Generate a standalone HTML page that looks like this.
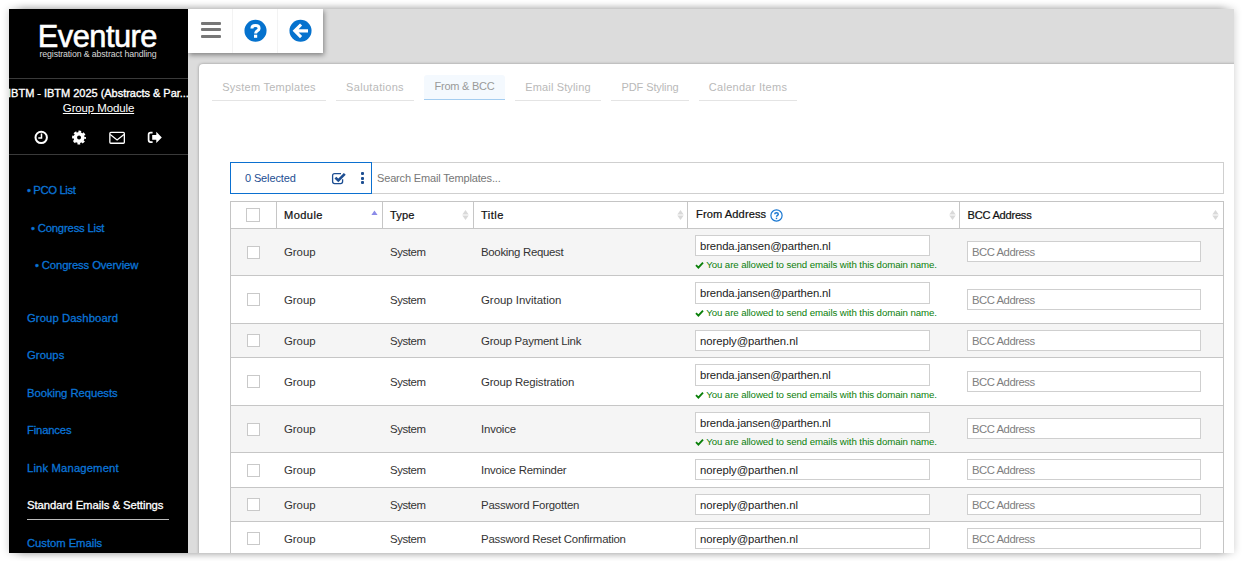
<!DOCTYPE html>
<html lang="en">
<head>
<meta charset="utf-8">
<title>Eventure - Standard Emails &amp; Settings</title>
<style>
*{box-sizing:border-box;margin:0;padding:0}
html,body{width:1242px;height:561px;background:#fff;overflow:hidden}
body{font-family:"Liberation Sans",sans-serif;font-size:11px;color:#222;position:relative}
#frame{position:absolute;left:9px;top:9px;width:1225px;height:544px;background:#dcdcdc;overflow:hidden}
#shA{position:absolute;left:9px;top:9px;width:1225px;height:544px;box-shadow:0 0 8px rgba(0,0,0,.2)}
#shB{position:absolute;left:19px;top:9px;width:1205px;height:544px;box-shadow:0 0 8px rgba(0,0,0,.29)}
.abs{position:absolute;white-space:nowrap}
/* sidebar */
#side{position:absolute;left:0;top:0;width:179px;height:544px;background:#000;overflow:hidden}
#side .hr{position:absolute;left:0;width:179px;height:1px;background:#3a3a3a}
#logo{left:28.7px;top:10px;font-size:30.8px;line-height:36px;color:#fff;letter-spacing:-.5px;-webkit-text-stroke:.6px #fff}
#sub{left:30.5px;top:39.5px;font-size:8.8px;line-height:10px;color:#d8d8d8}
#ev{left:-2px;top:76px;width:183px;text-align:center;font-size:11px;-webkit-text-stroke:.35px #fff;color:#fff;line-height:16px}
#gm{left:0;top:91px;width:179px;text-align:center;font-size:11.5px;color:#fff;line-height:16px;text-decoration:underline}
.mi{position:absolute;white-space:nowrap;font-size:11.3px;line-height:16px;color:#0b74d6;-webkit-text-stroke:.3px #0b74d6}
.mi.act{-webkit-text-stroke:.3px #fff}
.mi.act{color:#fff}
#actline{position:absolute;left:18px;top:510px;width:142px;height:1px;background:#bbb}
/* toolbar */
#tb{position:absolute;left:179px;top:0;width:135px;height:44px;background:#fff;box-shadow:1px 2px 5px rgba(0,0,0,.42)}
#tb .sep{position:absolute;top:0;width:1px;height:44px;background:#f3f3f3}
/* card */
#card{position:absolute;left:190px;top:55px;width:1040px;height:500px;background:#fff;border-radius:4px 0 0 0;box-shadow:0 0 3px rgba(0,0,0,.35)}
.tab{position:absolute;top:67px;height:25px;border-bottom:1px solid #e4e4e4;color:#b9b9b9;font-size:11px;line-height:22px;text-align:center;white-space:nowrap}
.tab.on{top:66px;background:#f4f9fe;border-bottom:1px solid #a4cdf0;color:#999;border-radius:3px 3px 0 0}
/* search row */
#sel{position:absolute;left:221px;top:153px;width:142px;height:32px;border:1px solid #0b70d0;background:#fff}
#search{position:absolute;left:362px;top:153px;width:853px;height:32px;border:1px solid #cfcfcf;border-left:none;background:#fff}
/* table */
#tbl{position:absolute;left:221px;top:192px;width:994px;height:400px;border-left:1px solid #c4c4c4;border-right:1px solid #c4c4c4;border-top:1px solid #c4c4c4;background:#fff}
.row{position:absolute;left:0;width:992px;border-bottom:1px solid #c6c6c6}
.row.g{background:#f5f5f5}
.cb{position:absolute;left:16px;width:13px;height:13px;border:1px solid #c9c9c9;background:#fff}
.c{position:absolute;white-space:nowrap;font-size:11.4px;line-height:14px;color:#333}
.h{position:absolute;white-space:nowrap;font-size:11.1px;line-height:14px;color:#111;-webkit-text-stroke:.22px #111;top:6px}
.vs{position:absolute;top:0;width:1px;height:27px;background:#c6c6c6}
.in{position:absolute;height:21px;border:1px solid #cfcfcf;background:#fff;font-size:11.3px;line-height:18px;padding:1px 0 0 4px;color:#222;white-space:nowrap}
.in.ph{color:#808080}
.ok{position:absolute;white-space:nowrap;font-size:9.7px;line-height:12px;color:#0a800a}
.sort{position:absolute;top:7px;width:7px;height:12px}
</style>
</head>
<body>
<div id="shA"></div><div id="shB"></div>
<div id="frame">
  <div id="side">
    <div id="logo" class="abs">Eventure</div>
    <div id="sub" class="abs" style="letter-spacing:-0.13px">registration &amp; abstract handling</div>
    <div class="hr" style="top:69px"></div>
    <div id="ev" class="abs" style="letter-spacing:-0.02px">IBTM - IBTM 2025 (Abstracts &amp; Par...</div>
    <div id="gm" class="abs" style="letter-spacing:-0.13px">Group Module</div>
        <svg style="position:absolute;left:0;top:116px;width:179px;height:26px" viewBox="0 116 179 26">
      <circle cx="32.2" cy="128.4" r="5.7" fill="none" stroke="#fff" stroke-width="2"/>
      <path d="M32.5 124.6 V129 H29.3" fill="none" stroke="#fff" stroke-width="1.5"/>
      <circle cx="70.05" cy="128.55" r="5.9" fill="none" stroke="#fff" stroke-width="2.1" stroke-dasharray="2.7 1.934" stroke-dashoffset="1.35"/>
      <circle cx="70.05" cy="128.55" r="3.75" fill="none" stroke="#fff" stroke-width="3.5"/>
      <rect x="100.85" y="123.45" width="14.5" height="10.8" rx="1" fill="none" stroke="#fff" stroke-width="1.3"/>
      <path d="M101.2 125.6 L108.1 131 L115 125.6" fill="none" stroke="#fff" stroke-width="1.3"/>
      <path d="M143.6 123.7 H141.6 Q139.6 123.7 139.6 125.7 V131.1 Q139.6 133.1 141.6 133.1 H143.6" fill="none" stroke="#fff" stroke-width="1.7"/>
      <path d="M143.2 126 H147.3 V122.7 L152.8 128.4 L147.3 134.1 V130.8 H143.2 Z" fill="#fff"/>
    </svg>
    <div class="hr" style="top:145px"></div>
    <div class="mi" style="left:18px;top:173px;letter-spacing:-0.38px">• PCO List</div>
    <div class="mi" style="left:22px;top:211px;letter-spacing:-0.19px">• Congress List</div>
    <div class="mi" style="left:26px;top:248px;letter-spacing:-0.13px">• Congress Overview</div>
    <div class="mi" style="left:18px;top:301px;letter-spacing:0.08px">Group Dashboard</div>
    <div class="mi" style="left:18px;top:338px;letter-spacing:0.05px">Groups</div>
    <div class="mi" style="left:18px;top:376px;letter-spacing:-0.07px">Booking Requests</div>
    <div class="mi" style="left:18px;top:413px;letter-spacing:-0.18px">Finances</div>
    <div class="mi" style="left:18px;top:451px;letter-spacing:0.13px">Link Management</div>
    <div class="mi act" style="left:18px;top:488px;letter-spacing:-0.04px">Standard Emails &amp; Settings</div>
    <div id="actline"></div>
    <div class="mi" style="left:18px;top:526px;letter-spacing:-0.06px">Custom Emails</div>
  </div>
  <div id="card"></div>
  <div id="tb">
    <div class="sep" style="left:44px"></div>
    <div class="sep" style="left:89px"></div>
    <div style="position:absolute;left:13px;top:13px;width:20px;height:3px;background:#777;border-radius:1px"></div>
    <div style="position:absolute;left:13px;top:19px;width:20px;height:3px;background:#777;border-radius:1px"></div>
    <div style="position:absolute;left:13px;top:26px;width:20px;height:3px;background:#777;border-radius:1px"></div>
    <svg style="position:absolute;left:56px;top:10px;width:23px;height:23px" viewBox="0 0 23 23"><circle cx="11.5" cy="11.8" r="11.05" fill="#0572ce"/><path d="M7.9 9.4 C7.9 5.6 15.1 5.6 15.1 9.4 C15.1 11.9 11.6 11.7 11.6 14.4" fill="none" stroke="#fff" stroke-width="3"/><rect x="10" y="15.7" width="3.2" height="3.1" fill="#fff"/></svg>
    <svg style="position:absolute;left:101px;top:10px;width:23px;height:23px" viewBox="0 0 23 23"><circle cx="11.5" cy="11.8" r="11.05" fill="#0572ce"/><path transform="translate(0,.3)" d="M3.6 11.5 L11 4.1 L13.1 6.2 L9.6 9.9 H19 V13.1 H9.6 L13.1 16.8 L11 18.9 Z" fill="#fff"/></svg>
  </div>
  <div class="tab" style="left:203px;width:114px;letter-spacing:0.25px">System Templates</div>
  <div class="tab" style="left:327px;width:78px;letter-spacing:0.31px">Salutations</div>
  <div class="tab on" style="left:415px;width:81px;letter-spacing:-0.23px">From &amp; BCC</div>
  <div class="tab" style="left:506px;width:86px;letter-spacing:0.14px">Email Styling</div>
  <div class="tab" style="left:602px;width:78px;letter-spacing:-0.11px">PDF Styling</div>
  <div class="tab" style="left:690px;width:98px;letter-spacing:0.27px">Calendar Items</div>
  <div id="search"><div class="abs" style="left:6px;top:8px;font-size:11px;line-height:14px;color:#777;letter-spacing:-0.16px">Search Email Templates...</div></div>
  <div id="sel"><div class="abs" style="left:14px;top:8px;font-size:11px;line-height:14px;color:#1d4e92;letter-spacing:-0.13px">0 Selected</div><svg style="position:absolute;left:100px;top:8px;width:16px;height:14px" viewBox="0 0 16 14"><path d="M11.6 8.2 V10.6 Q11.6 12.6 9.6 12.6 H3.6 Q1.6 12.6 1.6 10.6 V4.6 Q1.6 2.6 3.6 2.6 H10" fill="none" stroke="#1d4e92" stroke-width="1.3"/><path d="M4.4 6.6 L7.3 9.5 L13.8 2.9" fill="none" stroke="#1d4e92" stroke-width="2.6"/></svg><div style="position:absolute;left:129.5px;top:9.2px;width:3.8px;height:3.2px;background:#1d4e92;border-radius:1px"></div><div style="position:absolute;left:129.5px;top:13.5px;width:3.8px;height:3.2px;background:#1d4e92;border-radius:1px"></div><div style="position:absolute;left:129.5px;top:17.8px;width:3.8px;height:3.2px;background:#1d4e92;border-radius:1px"></div></div>
  <div id="tbl">
  <div class="row" style="top:0;height:27px;background:#fff">
    <div class="cb" style="top:6px;left:15px;width:14px;height:14px"></div>
    <div class="vs" style="left:45px"></div>
    <div class="vs" style="left:151px"></div>
    <div class="vs" style="left:242px"></div>
    <div class="vs" style="left:456px"></div>
    <div class="vs" style="left:728px"></div>
    <div class="h" style="left:53px;letter-spacing:0.42px">Module</div>
    <svg class="sort" style="left:140px;top:7px;height:7px" viewBox="0 0 7 7"><path d="M3.5 1.5 L6.6 5.9 H0.4 Z" fill="#8b8be8"/></svg>
    <div class="h" style="left:159px;letter-spacing:0.11px">Type</div>
    <svg class="sort" style="left:230.5px" viewBox="0 0 7 12"><path d="M3.5 1 L6.7 5.4 H0.3 Z M3.5 11 L6.7 6.6 H0.3 Z" fill="#d9d9d9"/></svg>
    <div class="h" style="left:250px;letter-spacing:0.46px">Title</div>
    <svg class="sort" style="left:445.7px" viewBox="0 0 7 12"><path d="M3.5 1 L6.7 5.4 H0.3 Z M3.5 11 L6.7 6.6 H0.3 Z" fill="#d9d9d9"/></svg>
    <div class="h" style="left:465px;top:5px;letter-spacing:0.10px">From Address</div>
    <svg style="position:absolute;left:539px;top:6.5px;width:13px;height:13px" viewBox="0 0 13 13"><circle cx="6.5" cy="6.5" r="5.6" fill="#fff" stroke="#1a78d2" stroke-width="1.2"/><path d="M4.7 5.2 C4.7 3.2 8.3 3.2 8.3 5.2 C8.3 6.4 6.5 6.4 6.5 7.8" fill="none" stroke="#1a78d2" stroke-width="1.4"/><rect x="5.8" y="8.7" width="1.4" height="1.4" fill="#1a78d2"/></svg>
    <svg class="sort" style="left:717.8px" viewBox="0 0 7 12"><path d="M3.5 1 L6.7 5.4 H0.3 Z M3.5 11 L6.7 6.6 H0.3 Z" fill="#d9d9d9"/></svg>
    <div class="h" style="left:736.5px;letter-spacing:-0.24px">BCC Address</div>
    <svg class="sort" style="left:980.5px" viewBox="0 0 7 12"><path d="M3.5 1 L6.7 5.4 H0.3 Z M3.5 11 L6.7 6.6 H0.3 Z" fill="#d9d9d9"/></svg>
  </div>
  <div class="row g" style="top:27px;height:47px">
    <div class="cb" style="top:17px"></div>
    <div class="c" style="left:53px;top:15.8px;letter-spacing:-0.02px">Group</div>
    <div class="c" style="left:159px;top:15.8px;letter-spacing:-0.40px">System</div>
    <div class="c" style="left:250px;top:15.8px;letter-spacing:-0.29px">Booking Request</div>
    <div class="in" style="left:464px;top:6px;width:235px"><span style="letter-spacing:-0.11px">brenda.jansen@parthen.nl</span></div>
    <svg style="position:absolute;left:464.2px;top:32.3px;width:9px;height:8px" viewBox="0 0 9 8"><path d="M1 4.2 L3.4 6.6 L8 1.6" fill="none" stroke="#0a800a" stroke-width="1.9"/></svg>
    <div class="ok" style="left:475.2px;top:30.2px;letter-spacing:-0.09px">You are allowed to send emails with this domain name.</div>
    <div class="in ph" style="left:736px;top:12px;width:234px"><span style="letter-spacing:-0.46px">BCC Address</span></div>
  </div>
  <div class="row" style="top:74px;height:48px">
    <div class="cb" style="top:17px"></div>
    <div class="c" style="left:53px;top:17px;letter-spacing:-0.02px">Group</div>
    <div class="c" style="left:159px;top:17px;letter-spacing:-0.40px">System</div>
    <div class="c" style="left:250px;top:17px;letter-spacing:-0.00px">Group Invitation</div>
    <div class="in" style="left:464px;top:6px;width:235px;height:22px"><span style="letter-spacing:-0.11px">brenda.jansen@parthen.nl</span></div>
    <svg style="position:absolute;left:464.2px;top:33.3px;width:9px;height:8px" viewBox="0 0 9 8"><path d="M1 4.2 L3.4 6.6 L8 1.6" fill="none" stroke="#0a800a" stroke-width="1.9"/></svg>
    <div class="ok" style="left:475.2px;top:31.2px;letter-spacing:-0.09px">You are allowed to send emails with this domain name.</div>
    <div class="in ph" style="left:736px;top:13px;width:234px"><span style="letter-spacing:-0.46px">BCC Address</span></div>
  </div>
  <div class="row g" style="top:122px;height:34px">
    <div class="cb" style="top:10px"></div>
    <div class="c" style="left:53px;top:10px;letter-spacing:-0.02px">Group</div>
    <div class="c" style="left:159px;top:10px;letter-spacing:-0.40px">System</div>
    <div class="c" style="left:250px;top:10px;letter-spacing:-0.20px">Group Payment Link</div>
    <div class="in" style="left:464px;top:6px;width:235px"><span style="letter-spacing:-0.05px">noreply@parthen.nl</span></div>
    <div class="in ph" style="left:736px;top:6px;width:234px"><span style="letter-spacing:-0.46px">BCC Address</span></div>
  </div>
  <div class="row" style="top:156px;height:48px">
    <div class="cb" style="top:17px"></div>
    <div class="c" style="left:53px;top:17px;letter-spacing:-0.02px">Group</div>
    <div class="c" style="left:159px;top:17px;letter-spacing:-0.40px">System</div>
    <div class="c" style="left:250px;top:17px;letter-spacing:-0.14px">Group Registration</div>
    <div class="in" style="left:464px;top:6px;width:235px;height:22px"><span style="letter-spacing:-0.11px">brenda.jansen@parthen.nl</span></div>
    <svg style="position:absolute;left:464.2px;top:33.3px;width:9px;height:8px" viewBox="0 0 9 8"><path d="M1 4.2 L3.4 6.6 L8 1.6" fill="none" stroke="#0a800a" stroke-width="1.9"/></svg>
    <div class="ok" style="left:475.2px;top:31.2px;letter-spacing:-0.09px">You are allowed to send emails with this domain name.</div>
    <div class="in ph" style="left:736px;top:13px;width:234px"><span style="letter-spacing:-0.46px">BCC Address</span></div>
  </div>
  <div class="row g" style="top:204px;height:47px">
    <div class="cb" style="top:17px"></div>
    <div class="c" style="left:53px;top:15.5px;letter-spacing:-0.02px">Group</div>
    <div class="c" style="left:159px;top:15.5px;letter-spacing:-0.40px">System</div>
    <div class="c" style="left:250px;top:15.5px;letter-spacing:-0.17px">Invoice</div>
    <div class="in" style="left:464px;top:6px;width:235px"><span style="letter-spacing:-0.11px">brenda.jansen@parthen.nl</span></div>
    <svg style="position:absolute;left:464.2px;top:32.3px;width:9px;height:8px" viewBox="0 0 9 8"><path d="M1 4.2 L3.4 6.6 L8 1.6" fill="none" stroke="#0a800a" stroke-width="1.9"/></svg>
    <div class="ok" style="left:475.2px;top:30.2px;letter-spacing:-0.09px">You are allowed to send emails with this domain name.</div>
    <div class="in ph" style="left:736px;top:12px;width:234px"><span style="letter-spacing:-0.46px">BCC Address</span></div>
  </div>
  <div class="row" style="top:251px;height:35px">
    <div class="cb" style="top:11px"></div>
    <div class="c" style="left:53px;top:9.5px;letter-spacing:-0.02px">Group</div>
    <div class="c" style="left:159px;top:9.5px;letter-spacing:-0.40px">System</div>
    <div class="c" style="left:250px;top:9.5px;letter-spacing:-0.20px">Invoice Reminder</div>
    <div class="in" style="left:464px;top:6px;width:235px"><span style="letter-spacing:-0.05px">noreply@parthen.nl</span></div>
    <div class="in ph" style="left:736px;top:6px;width:234px"><span style="letter-spacing:-0.46px">BCC Address</span></div>
  </div>
  <div class="row g" style="top:286px;height:34px">
    <div class="cb" style="top:10px"></div>
    <div class="c" style="left:53px;top:10px;letter-spacing:-0.02px">Group</div>
    <div class="c" style="left:159px;top:10px;letter-spacing:-0.40px">System</div>
    <div class="c" style="left:250px;top:10px;letter-spacing:-0.21px">Password Forgotten</div>
    <div class="in" style="left:464px;top:6px;width:235px"><span style="letter-spacing:-0.05px">noreply@parthen.nl</span></div>
    <div class="in ph" style="left:736px;top:6px;width:234px"><span style="letter-spacing:-0.46px">BCC Address</span></div>
  </div>
  <div class="row" style="top:320px;height:35px">
    <div class="cb" style="top:10px"></div>
    <div class="c" style="left:53px;top:9.5px;letter-spacing:-0.02px">Group</div>
    <div class="c" style="left:159px;top:9.5px;letter-spacing:-0.40px">System</div>
    <div class="c" style="left:250px;top:9.5px;letter-spacing:-0.22px">Password Reset Confirmation</div>
    <div class="in" style="left:464px;top:6px;width:235px"><span style="letter-spacing:-0.05px">noreply@parthen.nl</span></div>
    <div class="in ph" style="left:736px;top:6px;width:234px"><span style="letter-spacing:-0.46px">BCC Address</span></div>
  </div>
  </div>
</div>
</body>
</html>
